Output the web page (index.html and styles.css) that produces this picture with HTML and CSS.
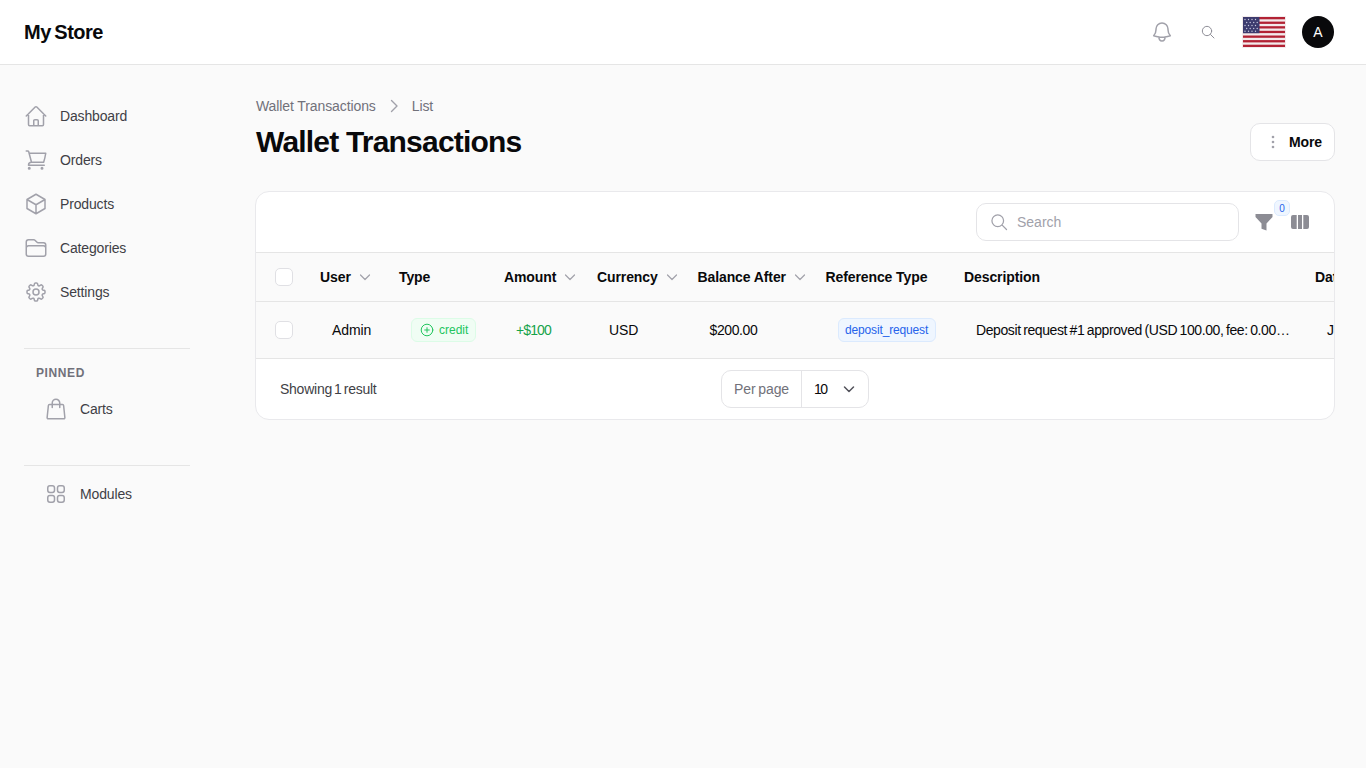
FILE: index.html
```html
<!DOCTYPE html>
<html lang="en">
<head>
<meta charset="utf-8">
<title>Wallet Transactions</title>
<link rel="stylesheet" href="styles.css">
</head>
<body>
<header class="topbar">
  <div class="brand">My Store</div>
  <div class="top-actions">
    <svg class="ic-bell" viewBox="0 0 24 24"><path d="M14.86 17.08a24.6 24.6 0 0 0 5.45-1.31A9 9 0 0 1 18 9.75V9a6 6 0 0 0-12 0v.75a9 9 0 0 1-2.31 6.02 24.3 24.3 0 0 0 5.45 1.31m5.72 0a24.3 24.3 0 0 1-5.72 0m5.72 0a3 3 0 1 1-5.72 0"/></svg>
    <svg class="ic-search" viewBox="0 0 24 24"><path d="m21 21-5.2-5.2M17.5 10.5a7 7 0 1 1-14 0 7 7 0 0 1 14 0Z"/></svg>
    <svg class="flag" viewBox="0 0 44 32">
      <rect width="44" height="32" fill="#f3ebec"/>
      <g fill="#b22234">
        <rect x="1" y="1" width="42" height="2.3"/><rect x="1" y="5.6" width="42" height="2.3"/><rect x="1" y="10.2" width="42" height="2.3"/><rect x="1" y="14.8" width="42" height="2.3"/><rect x="1" y="19.500" width="42" height="2.3"/><rect x="1" y="24.100" width="42" height="2.3"/><rect x="1" y="28.700" width="42" height="2.3"/>
      </g>
      <rect x="1" y="1" width="16.500" height="16.200" fill="#3c3b6e"/>
      <g fill="#c9cbe0"><circle cx="3" cy="3.500" r=".7"/><circle cx="6.500" cy="3.500" r=".7"/><circle cx="10" cy="3.500" r=".7"/><circle cx="13.500" cy="3.500" r=".7"/><circle cx="4.700" cy="6.500" r=".7"/><circle cx="8.200" cy="6.500" r=".7"/><circle cx="11.700" cy="6.500" r=".7"/><circle cx="15.200" cy="6.500" r=".7"/><circle cx="3" cy="9.500" r=".7"/><circle cx="6.500" cy="9.500" r=".7"/><circle cx="10" cy="9.500" r=".7"/><circle cx="13.500" cy="9.500" r=".7"/><circle cx="4.700" cy="12.500" r=".7"/><circle cx="8.200" cy="12.500" r=".7"/><circle cx="11.700" cy="12.500" r=".7"/><circle cx="15.200" cy="12.500" r=".7"/><circle cx="3" cy="15.300" r=".7"/><circle cx="6.500" cy="15.300" r=".7"/><circle cx="10" cy="15.300" r=".7"/><circle cx="13.500" cy="15.300" r=".7"/></g>
    </svg>
    <div class="avatar">A</div>
  </div>
</header>
<div class="shell">
  <aside class="sidebar">
    <nav class="nav">
      <a class="nav-item"><svg class="ic" viewBox="0 0 24 24"><path d="m2.25 12 8.95-8.95a1.13 1.13 0 0 1 1.6 0L21.75 12M4.5 9.75V20.6c0 .62.5 1.13 1.13 1.13H9.75v-4.88c0-.62.5-1.12 1.13-1.12h2.25c.62 0 1.12.5 1.12 1.12v4.88h4.13c.62 0 1.12-.5 1.12-1.13V9.75M8.25 21.75h8.25"/></svg>Dashboard</a>
      <a class="nav-item"><svg class="ic" viewBox="0 0 24 24"><path d="M2.25 3h1.39c.51 0 .95.34 1.09.83l.38 1.44m0 0L7.5 14.25m-1.89-9H21.75a60 60 0 0 1-2.12 9H7.5m0 0a3 3 0 0 0-3 3h15.75M6 20.25a.75.75 0 1 1-1.5 0 .75.75 0 0 1 1.5 0Zm12.75 0a.75.75 0 1 1-1.5 0 .75.75 0 0 1 1.5 0Z"/></svg>Orders</a>
      <a class="nav-item"><svg class="ic" viewBox="0 0 24 24"><path d="m21 7.5-9-5.25L3 7.5m18 0-9 5.25m9-5.25v9L12 21.75M3 7.5l9 5.25M3 7.5v9l9 5.25m0-9v9"/></svg>Products</a>
      <a class="nav-item"><svg class="ic" viewBox="0 0 24 24"><path d="M2.25 12.75V12A2.25 2.25 0 0 1 4.5 9.75h15A2.25 2.25 0 0 1 21.75 12v.75m-8.69-6.44-2.12-2.12a1.5 1.5 0 0 0-1.06-.44H4.5A2.25 2.25 0 0 0 2.25 6v12a2.25 2.25 0 0 0 2.25 2.25h15A2.25 2.25 0 0 0 21.75 18V9a2.25 2.25 0 0 0-2.25-2.25h-5.38a1.5 1.5 0 0 1-1.06-.44Z"/></svg>Categories</a>
      <a class="nav-item"><svg class="ic" viewBox="0 0 24 24"><path d="M10.34 3.94c.09-.54.56-.94 1.11-.94h1.1c.55 0 1.02.4 1.11.94l.15.89c.07.42.38.76.78.93.4.17.86.15 1.22-.1l.74-.53a1.13 1.13 0 0 1 1.45.12l.77.78c.39.39.44 1 .12 1.45l-.52.73c-.26.36-.27.82-.1 1.22.17.4.5.71.93.78l.89.15c.54.09.94.56.94 1.11v1.1c0 .55-.4 1.02-.94 1.11l-.89.15c-.42.07-.76.38-.93.78-.17.4-.15.86.1 1.22l.52.74c.32.45.27 1.06-.12 1.45l-.77.77a1.13 1.13 0 0 1-1.45.12l-.74-.52c-.36-.26-.82-.27-1.22-.1-.4.17-.71.5-.78.93l-.15.89c-.09.54-.56.94-1.11.94h-1.1c-.55 0-1.02-.4-1.11-.94l-.15-.89c-.07-.42-.38-.76-.78-.93-.4-.17-.86-.15-1.22.1l-.74.52a1.13 1.13 0 0 1-1.45-.12l-.77-.77a1.13 1.13 0 0 1-.12-1.45l.52-.74c.26-.36.27-.82.1-1.22-.17-.4-.5-.71-.93-.78l-.89-.15A1.13 1.13 0 0 1 3 12.55v-1.1c0-.55.4-1.02.94-1.11l.89-.15c.42-.07.76-.38.93-.78.17-.4.15-.86-.1-1.22l-.52-.74a1.13 1.13 0 0 1 .12-1.45l.77-.77a1.13 1.13 0 0 1 1.45-.12l.73.52c.36.26.82.27 1.22.1.4-.17.71-.5.78-.93l.15-.89Z"/><path d="M15 12a3 3 0 1 1-6 0 3 3 0 0 1 6 0Z"/></svg>Settings</a>
    </nav>
    <div class="side-group pinned">
      <div class="group-label">PINNED</div>
      <a class="nav-item sub"><svg class="ic" viewBox="0 0 24 24"><path d="M15.75 10.5V6a3.75 3.75 0 0 0-7.5 0v4.5m11.36-1.99 1.26 12a1.13 1.13 0 0 1-1.12 1.24H4.25a1.13 1.13 0 0 1-1.12-1.24l1.26-12A1.13 1.13 0 0 1 5.51 7.5h12.98c.58 0 1.06.43 1.12 1.01Z"/></svg>Carts</a>
    </div>
    <div class="side-group">
      <a class="nav-item sub"><svg class="ic" viewBox="0 0 24 24"><rect x="3.75" y="3.75" width="6.75" height="6.75" rx="2.2"/><rect x="13.5" y="3.75" width="6.75" height="6.75" rx="2.2"/><rect x="3.75" y="13.5" width="6.75" height="6.75" rx="2.2"/><rect x="13.5" y="13.5" width="6.75" height="6.75" rx="2.2"/></svg>Modules</a>
    </div>
  </aside>
  <main class="main">
    <div class="crumbs"><span>Wallet Transactions</span><svg class="crumb-sep" viewBox="0 0 16 16"><path d="m5.500 2.500 5.500 5.500-5.500 5.500"/></svg><span>List</span></div>
    <div class="title-row">
      <h1>Wallet Transactions</h1>
      <button class="more"><svg class="dots" viewBox="0 0 4 16"><circle cx="2" cy="3" r="1.300"/><circle cx="2" cy="8" r="1.300"/><circle cx="2" cy="13" r="1.300"/></svg>More</button>
    </div>
    <section class="card">
      <div class="toolbar">
        <div class="search"><svg class="search-ic" viewBox="0 0 24 24"><path d="m21 21-5.2-5.2M17.5 10.5a7 7 0 1 1-14 0 7 7 0 0 1 14 0Z"/></svg><span>Search</span></div>
        <div class="filter">
          <svg class="filter-ic" viewBox="0 0 20 20"><path d="M1.500 2h17v3l-6 6.500v7l-5-1.800v-5.200l-6-6.500Z"/></svg>
          <span class="count">0</span>
        </div>
        <svg class="cols-ic" viewBox="0 0 18 14"><path d="M2 0h3.700v14H2a2 2 0 0 1-2-2V2a2 2 0 0 1 2-2ZM7 0h4v14H7ZM12.300 0H16a2 2 0 0 1 2 2v10a2 2 0 0 1-2 2h-3.700Z"/></svg>
      </div>
      <div class="table-wrap">
        <table>
          <colgroup><col class="c-check"><col class="c-user"><col class="c-type"><col class="c-amount"><col class="c-cur"><col class="c-bal"><col class="c-ref"><col class="c-desc"><col class="c-date"></colgroup>
          <thead>
            <tr>
              <th class="check-cell"><span class="box"></span></th>
              <th><span class="th-in">User<svg class="sort" viewBox="0 0 12 12"><path d="m1.500 4 4.500 4.500L10.500 4"/></svg></span></th>
              <th>Type</th>
              <th><span class="th-in">Amount<svg class="sort" viewBox="0 0 12 12"><path d="m1.500 4 4.500 4.500L10.500 4"/></svg></span></th>
              <th><span class="th-in">Currency<svg class="sort" viewBox="0 0 12 12"><path d="m1.500 4 4.500 4.500L10.500 4"/></svg></span></th>
              <th><span class="th-in">Balance After<svg class="sort" viewBox="0 0 12 12"><path d="m1.500 4 4.500 4.500L10.500 4"/></svg></span></th>
              <th>Reference Type</th>
              <th>Description</th>
              <th>Date</th>
            </tr>
          </thead>
          <tbody>
            <tr>
              <td class="check-cell"><span class="box"></span></td>
              <td>Admin</td>
              <td><span class="badge green"><svg class="plus" viewBox="0 0 14 14"><circle cx="7" cy="7" r="5.800"/><path d="M7 4.700v4.600M4.700 7h4.600"/></svg>credit</span></td>
              <td class="pos">+$100</td>
              <td>USD</td>
              <td class="money">$200.00</td>
              <td><span class="badge blue">deposit_request</span></td>
              <td><div class="desc">Deposit request #1 approved (USD 100.00, fee: 0.00, net: 100.00)</div></td>
              <td>Jan 12, 2026</td>
            </tr>
          </tbody>
        </table>
      </div>
      <div class="foot">
        <div class="showing">Showing 1 result</div>
        <div class="perpage"><span class="pp-label">Per page</span><span class="pp-val"><span class="pp-num">10</span><svg class="pp-chev" viewBox="0 0 12 12"><path d="m1.500 4 4.500 4.500L10.500 4"/></svg></span></div>
      </div>
    </section>
  </main>
</div>
</body>
</html>
```
FILE: styles.css
```css
* { box-sizing: border-box; }
html, body { margin: 0; height: 100%; }
body {
  background: #fafafa;
  color: #0a0a0a;
  font-family: "Liberation Sans", Arial, sans-serif;
  font-size: 14px;
  overflow: hidden;
}
svg { display: block; flex: none; fill: none; stroke-linecap: round; stroke-linejoin: round; }

.topbar {
  height: 65px;
  background: #fff;
  border-bottom: 1px solid #e5e5e5;
  display: flex;
  align-items: center;
  justify-content: space-between;
  padding: 0 32px 0 24px;
}
.brand { font-size: 20px; font-weight: 700; letter-spacing: -0.5px; word-spacing: -1.5px; color: #09090b; }
.top-actions { display: flex; align-items: center; }
.ic-bell { width: 24px; height: 24px; stroke: #a1a1aa; stroke-width: 1.5; margin-right: 26px; }
.ic-search { width: 16px; height: 16px; stroke: #8f8f98; stroke-width: 1.5; margin-right: 26px; }
.flag { width: 44px; height: 32px; margin-right: 16px; }
.avatar {
  width: 32px; height: 32px; border-radius: 50%;
  background: #09090b; color: #fff;
  display: flex; align-items: center; justify-content: center;
  font-size: 14px;
}

.shell { display: flex; }
.sidebar { width: 214px; margin-left: 24px; padding-top: 29px; flex: none; }
.nav { display: flex; flex-direction: column; }
.nav-item {
  height: 44px;
  display: flex; align-items: center; gap: 12px;
  color: #3f3f46;
  letter-spacing: -0.15px;
}
.nav-item.sub { margin-left: 20px; }
.ic { width: 24px; height: 24px; stroke: #a1a1aa; stroke-width: 1.5; }
.side-group { width: 166px; border-top: 1px solid #e5e5e5; }
.pinned { margin-top: 34px; height: 117px; padding-top: 17px; }
.group-label {
  margin-left: 12px;
  font-size: 12px; font-weight: 700; letter-spacing: 0.6px;
  color: #71717a; line-height: 14px; margin-bottom: 7px;
}
.side-group:last-child { padding-top: 6px; }

.main { width: 1079px; margin-left: 18px; flex: none; padding-top: 33px; }
.crumbs { display: flex; align-items: center; gap: 10px; height: 16px; color: #71717a; letter-spacing: -0.1px; }
.crumb-sep { width: 16px; height: 16px; stroke: #a1a1aa; stroke-width: 1.4; }
.title-row { display: flex; align-items: center; justify-content: space-between; margin-top: 9px; height: 38px; }
h1 { margin: 0; font-size: 30px; font-weight: 700; letter-spacing: -0.8px; line-height: 36px; color: #09090b; }
.more {
  width: 85px; height: 38px;
  background: #fff;
  border: 1px solid #e4e4e7; border-radius: 10px;
  display: flex; align-items: center; gap: 14px;
  padding: 0 0 0 20px;
  font: 700 14px "Liberation Sans", Arial, sans-serif;
  letter-spacing: -0.1px;
  color: #09090b;
}
.dots { width: 4px; height: 16px; fill: #a1a1aa; }

.card {
  margin: 30px 0 0 -1px;
  width: 1080px;
  height: 229px;
  background: #fff;
  border: 1px solid #e9e9ec;
  border-radius: 14px;
  overflow: hidden;
}
.toolbar {
  height: 61px;
  border-bottom: 1px solid #e5e5e5;
  display: flex; align-items: center;
  padding-left: 720px;
}
.search {
  width: 263px; height: 38px;
  border: 1px solid #e4e4e7; border-radius: 10px;
  display: flex; align-items: center; gap: 8px;
  padding-left: 12px;
  color: #a1a1aa;
}
.search-ic { width: 20px; height: 20px; stroke: #a1a1aa; stroke-width: 1.5; }
.filter { position: relative; margin-left: 15px; }
.filter-ic { width: 20px; height: 20px; fill: #8c8c94; }
.count {
  position: absolute; left: 20px; top: -12px;
  width: 16px; height: 16px; border-radius: 5px;
  background: #eff6ff; border: 1px solid #dbeafe;
  color: #2563eb; font-size: 10px;
  display: flex; align-items: center; justify-content: center;
}
.cols-ic { width: 18px; height: 14px; fill: #8c8c94; margin-left: 17px; }

.table-wrap { overflow: hidden; }
table { border-collapse: collapse; table-layout: fixed; width: 1147px; background: #fafafa; }
.c-check { width: 52px; }
.c-user { width: 79px; }
.c-type { width: 105px; }
.c-amount { width: 93px; }
.c-cur { width: 100.5px; }
.c-bal { width: 128px; }
.c-ref { width: 138.5px; }
.c-desc { width: 351px; }
.c-date { width: 100px; }
th {
  height: 48px; padding: 0 0 0 12px;
  text-align: left; font-weight: 700; font-size: 14px;
  letter-spacing: -0.1px; color: #09090b;
  border-bottom: 1px solid #e5e5e5;
  white-space: nowrap; overflow: hidden;
}
td {
  height: 57px; padding: 0 0 0 24px;
  color: #09090b; white-space: nowrap; overflow: hidden;
  border-bottom: 1px solid #e5e5e5;
  letter-spacing: -0.1px;
}
.check-cell { padding: 0 0 0 19px; }
.box {
  display: block; width: 18px; height: 18px;
  background: #fff; border: 1px solid #e0e0e4; border-radius: 5px;
}
.th-in { display: inline-flex; align-items: center; gap: 8px; }
.sort { width: 12px; height: 12px; stroke: #a1a1aa; stroke-width: 1.2; }
.badge {
  display: inline-flex; align-items: center; height: 24px;
  border-radius: 6px; font-size: 12px; padding: 0 7px;
  letter-spacing: 0;
  vertical-align: middle;
}
.green { background: #f0fdf4; border: 1px solid #dcfce7; color: #22c55e; gap: 5px; padding-left: 8px; }
.plus { width: 14px; height: 14px; stroke: #22c55e; stroke-width: 1; }
.blue { background: #eff6ff; border: 1px solid #dbeafe; color: #2563eb; letter-spacing: -0.15px; padding: 0 6.5px; }
.pos { color: #16a34a; letter-spacing: -0.9px; }
.money { letter-spacing: -0.4px; }
.desc { width: 315px; overflow: hidden; text-overflow: ellipsis; letter-spacing: -0.4px; word-spacing: -1px; }

.foot { height: 61px; position: relative; display: flex; align-items: center; padding-left: 24px; }
.showing { color: #3f3f46; letter-spacing: -0.25px; word-spacing: -1.5px; }
.perpage {
  position: absolute; left: 465px; top: 11px;
  width: 148px; height: 38px;
  border: 1px solid #e4e4e7; border-radius: 10px;
  display: flex; align-items: center;
}
.pp-label { width: 80px; height: 100%; border-right: 1px solid #e4e4e7; display: flex; align-items: center; justify-content: center; color: #71717a; letter-spacing: -0.1px; word-spacing: -1px; }
.pp-val { flex: 1; display: flex; align-items: center; justify-content: space-between; padding: 0 13px 0 12px; color: #09090b; }
.pp-num { letter-spacing: -1.6px; }
.pp-chev { width: 12px; height: 12px; stroke: #52525b; stroke-width: 1.5; }
```
